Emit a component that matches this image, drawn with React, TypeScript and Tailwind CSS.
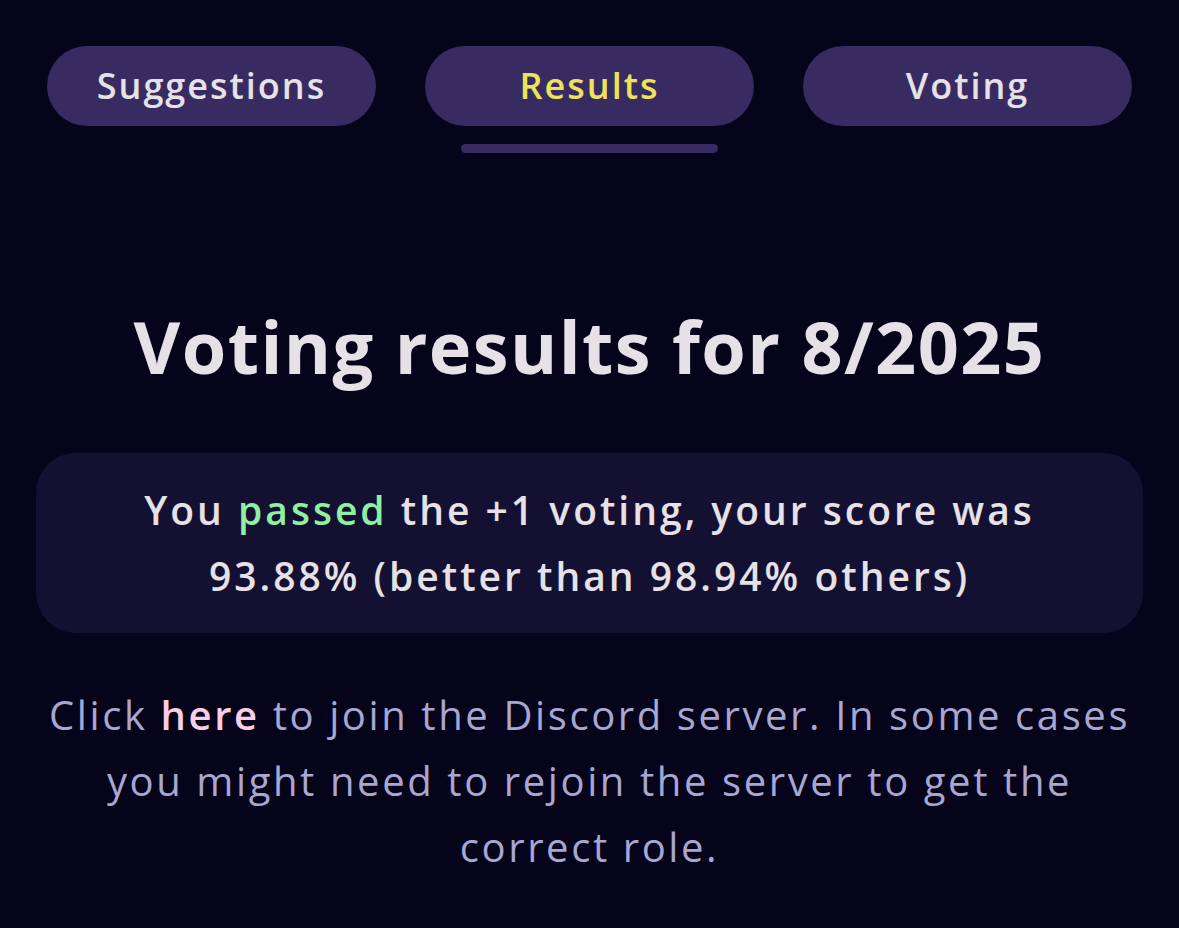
import React from 'react';

const tabs = ['Suggestions', 'Results', 'Voting'];

export default function App() {
    const active = 'Results';

    return (
        <div
            className="min-h-[928px] w-full bg-[#05041b] text-[#e6e1e6]"
            style={{ fontFamily: '"Open Sans", "Noto Sans", sans-serif' }}
        >
            {/* Tabs */}
            <div className="grid grid-cols-3 gap-[49px] px-[47px] pt-[46px]">
                {tabs.map((tab) => (
                    <div key={tab} className="flex flex-col items-center">
                        <button
                            className={
                                tab === active
                                    ? 'h-[80px] w-full rounded-full bg-[#372b62] text-[36px] font-semibold tracking-[2px] text-[#ede35a]'
                                    : 'h-[80px] w-full rounded-full bg-[#372b62] text-[36px] font-semibold tracking-[2px] text-[#e6e1e6]'
                            }
                        >
                            {tab}
                        </button>
                        {tab === active && <div className="mt-[18px] h-[9px] w-[257px] rounded-full bg-[#372b62]" />}
                    </div>
                ))}
            </div>

            {/* Heading */}
            <h1 className="mt-[148px] text-center text-[72px] font-bold leading-[90px] tracking-[1.4px]">
                Voting results for 8/2025
            </h1>

            {/* Result card */}
            <div className="mx-[36px] mt-[62px] flex justify-center rounded-[40px] bg-[#141031] py-[24px]">
                <p className="max-w-[960px] text-center text-[39px] font-semibold leading-[66px] tracking-[3px]">
                    You <span className="text-[#8ff0a4]">passed</span> the +1 voting, your score was 93.88% (better than 98.94% others)
                </p>
            </div>

            {/* Discord note */}
            <p className="mx-[36px] mt-[49px] text-center text-[40px] leading-[66px] tracking-[2.6px] text-[#a9a6d0]">
                Click <span className="font-semibold text-[#fbcfe3]">here</span> to join the Discord server. In some cases you might need to rejoin the server to get the correct role.
            </p>
        </div>
    );
}
